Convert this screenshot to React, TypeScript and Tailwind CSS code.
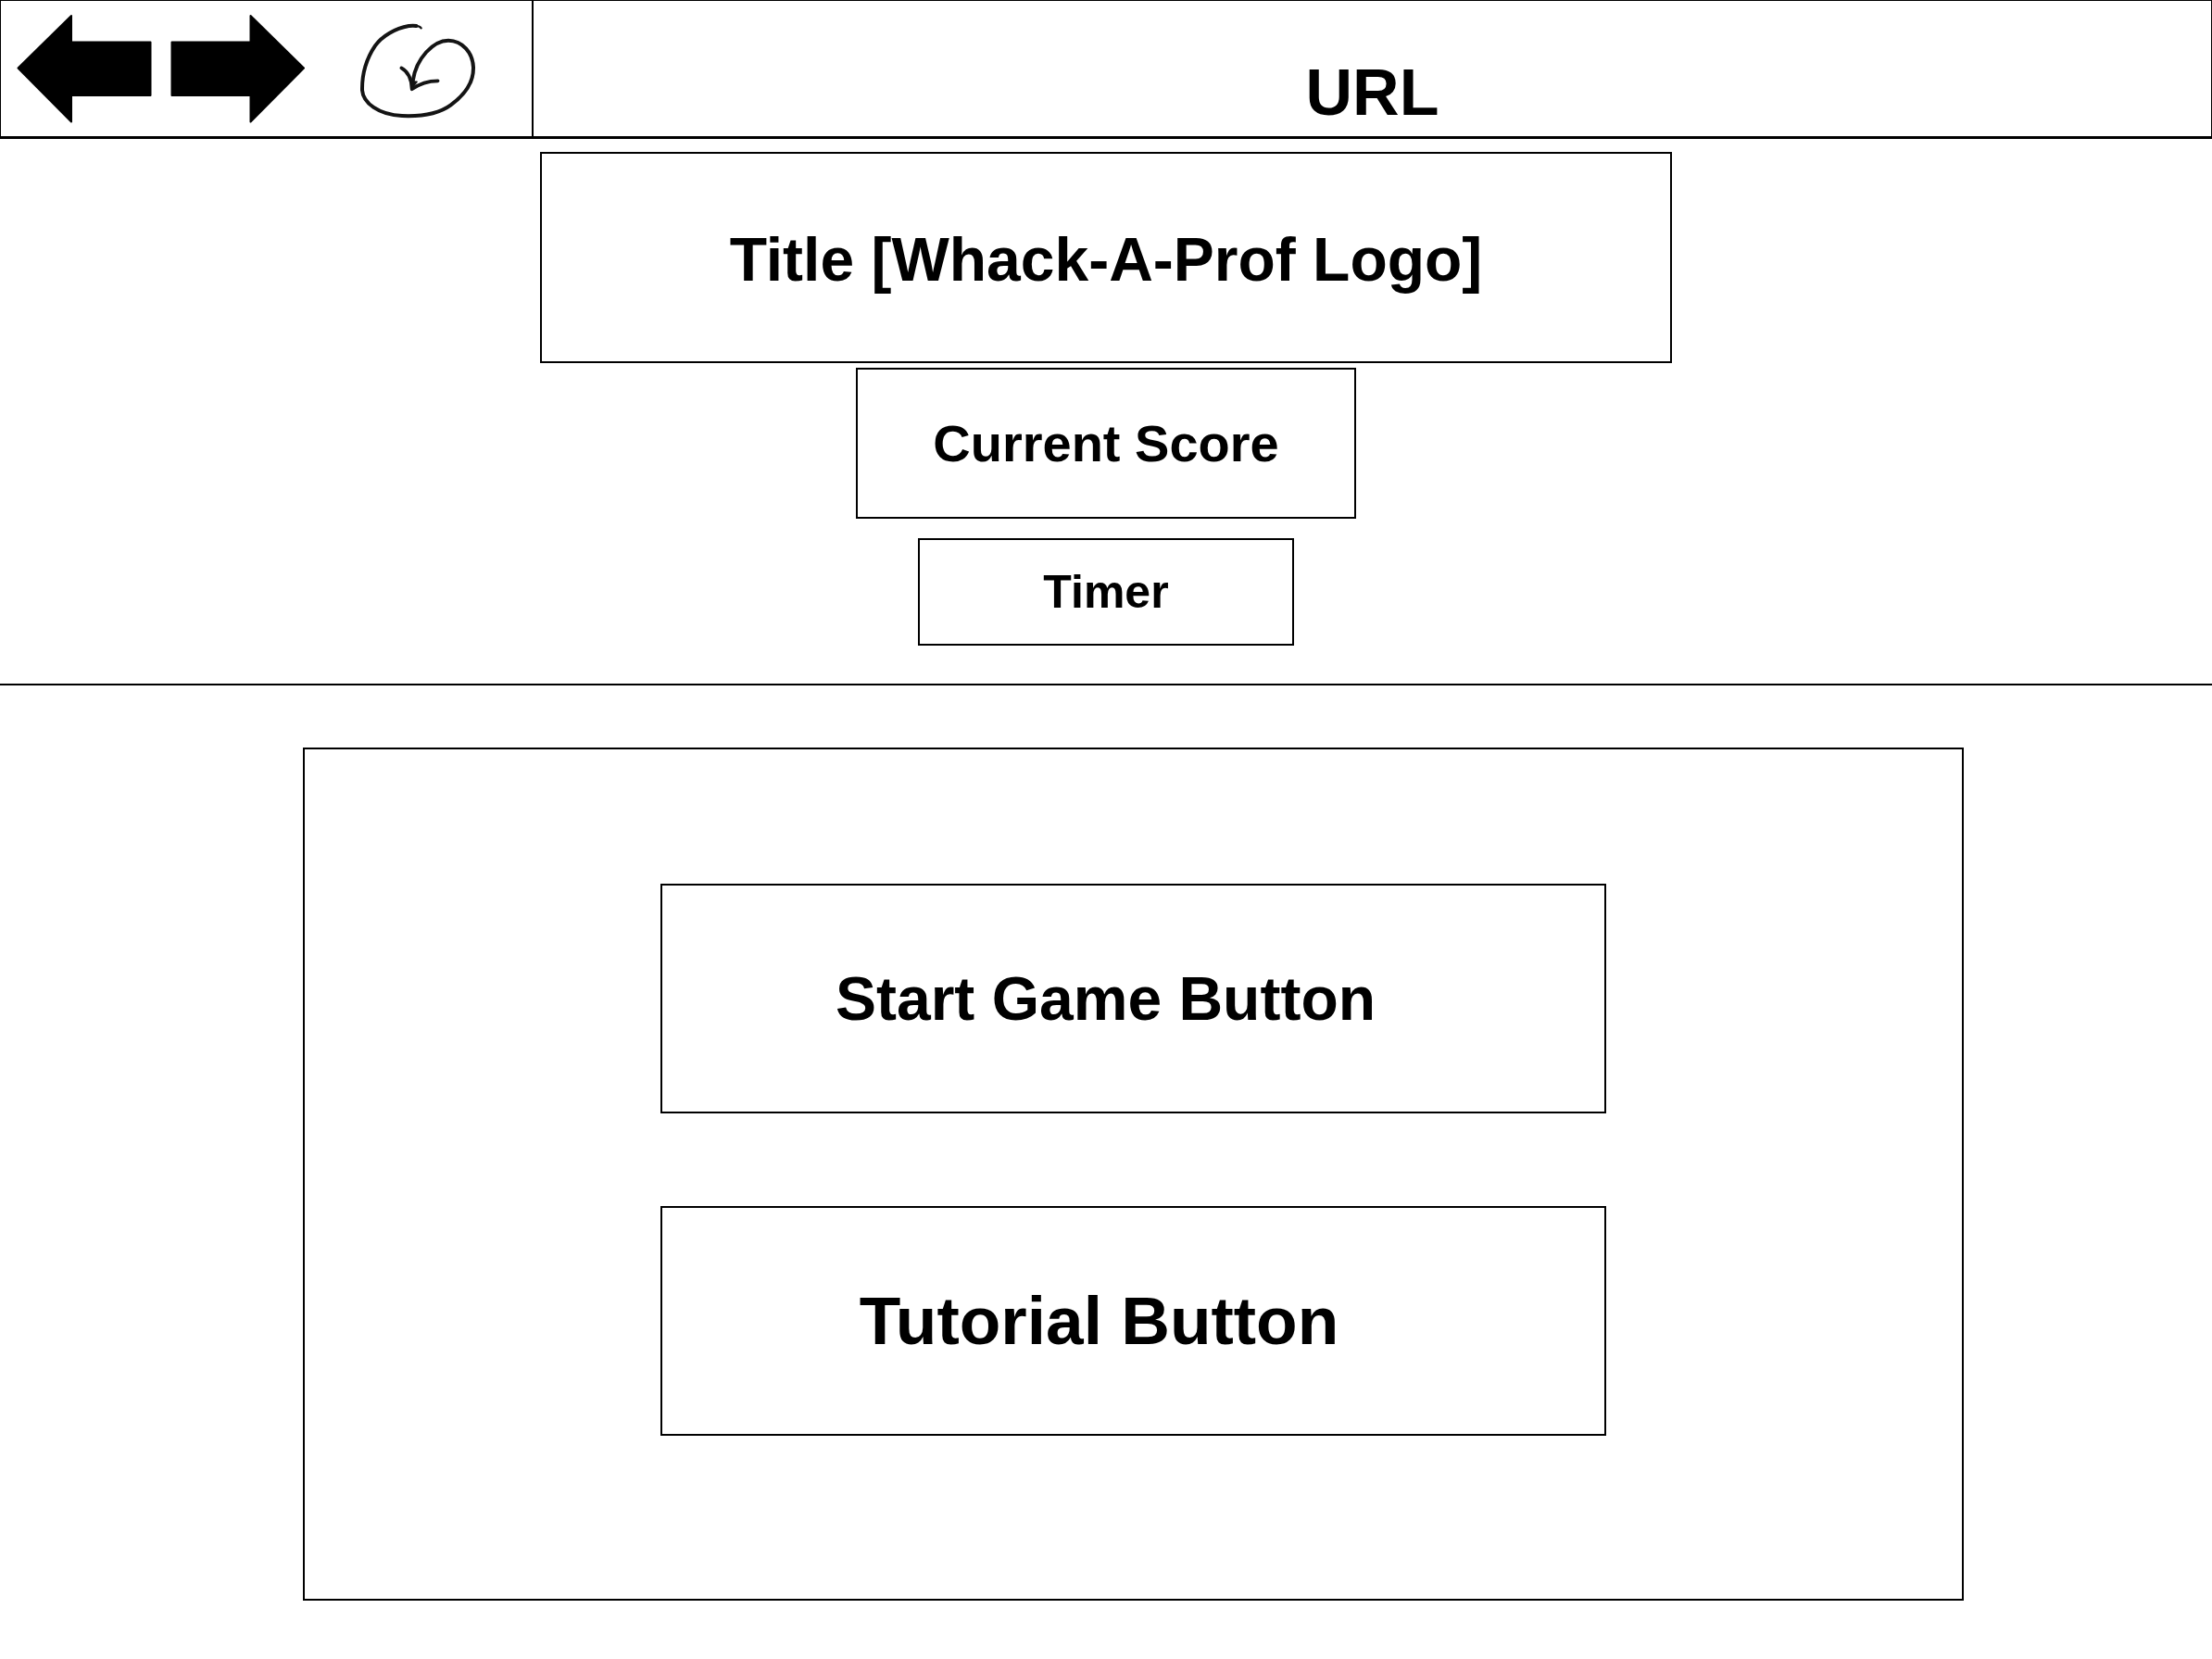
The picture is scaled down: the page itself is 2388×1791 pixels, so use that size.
import React from "react";

function ArrowIcon({ flipped = false }: { flipped?: boolean }) {
  return (
    <svg
      viewBox="0 0 146 118"
      className="block h-[118px] w-[146px]"
      fill="currentColor"
      stroke="currentColor"
      strokeLinejoin="round"
      aria-hidden="true"
    >
      {flipped ? (
        <path d="M144 58.500 86.500 116.500 V88 H1.500 V30.500 H86.500 V2Z" strokeWidth="2" />
      ) : (
        <path d="M1.500 58.500 59 2 V30.500 H144.500 V88 H59 V116.500Z" strokeWidth="2" />
      )}
    </svg>
  );
}

function ReloadIcon() {
  return (
    <svg
      viewBox="48 24 390 336"
      className="block h-[112px] w-[130px]"
      fill="none"
      stroke="#141414"
      strokeLinecap="round"
      strokeLinejoin="round"
      aria-hidden="true"
    >
      <path d="M254 61C250 55 240 53 226 53" strokeWidth="7" />
      <path
        d="M238 54C228 52 222 53 214 54C170 62 128 86 105 118C78 158 62 200 63 262C66 303 116 342 192 345C262 348 312 338 350 310C396 277 424 234 423 188C421 140 388 102 342 101C294 101 238 158 227 232"
        strokeWidth="12"
      />
      <path d="M190 190C208 200 223 220 224 259C246 243 274 232 308 232" strokeWidth="11" />
      <path d="M224 256L228 234L240 235Z" fill="#141414" strokeWidth="5" />
    </svg>
  );
}

function BrowserBar() {
  return (
    <header className="flex h-[150px] border border-b-3 border-black">
      <nav aria-label="Browser" className="flex w-[575px] shrink-0 items-center border-r-2 border-black pl-[17px]">
        <button type="button" aria-label="Back">
          <ArrowIcon />
        </button>
        <button type="button" aria-label="Forward" className="ml-5">
          <ArrowIcon flipped />
        </button>
        <button type="button" aria-label="Reload" className="ml-14">
          <ReloadIcon />
        </button>
      </nav>
      <input
        type="text"
        aria-label="Address"
        defaultValue="URL"
        className="min-w-0 flex-1 bg-transparent pt-[52px] text-center text-[70px] leading-[80px] font-bold outline-none"
      />
    </header>
  );
}

export default function App() {
  return (
    <div className="min-h-screen bg-white font-['Liberation_Sans',Arial,sans-serif] font-bold text-black">
      <BrowserBar />

      <section className="flex flex-col items-center border-b-2 border-black pt-3.5 pb-[41px]">
        <h1 className="flex h-[228px] w-full max-w-[1222px] items-center justify-center border-2 border-black pt-1 text-[66px]">
          Title [Whack-A-Prof Logo]
        </h1>
        <div className="mt-[5px] flex h-[163px] w-full max-w-[540px] items-center justify-center border-2 border-black text-[56px]">
          Current Score
        </div>
        <div className="mt-[21px] flex h-[116px] w-full max-w-[406px] items-center justify-center border-2 border-black text-[50px]">
          Timer
        </div>
      </section>

      <main className="flex justify-center pt-[67px] pb-[63px] pl-[59px]">
        <div className="flex w-full max-w-[1793px] flex-col items-center gap-[100px] border-2 border-black pt-[145px] pb-[176px]">
          <button
            type="button"
            className="h-[248px] w-full max-w-[1021px] border-2 border-black pr-[60px] text-[66px]"
          >
            Start Game Button
          </button>
          <button
            type="button"
            className="h-[248px] w-full max-w-[1021px] border-2 border-black pr-[74px] text-[73px]"
          >
            Tutorial Button
          </button>
        </div>
      </main>
    </div>
  );
}
